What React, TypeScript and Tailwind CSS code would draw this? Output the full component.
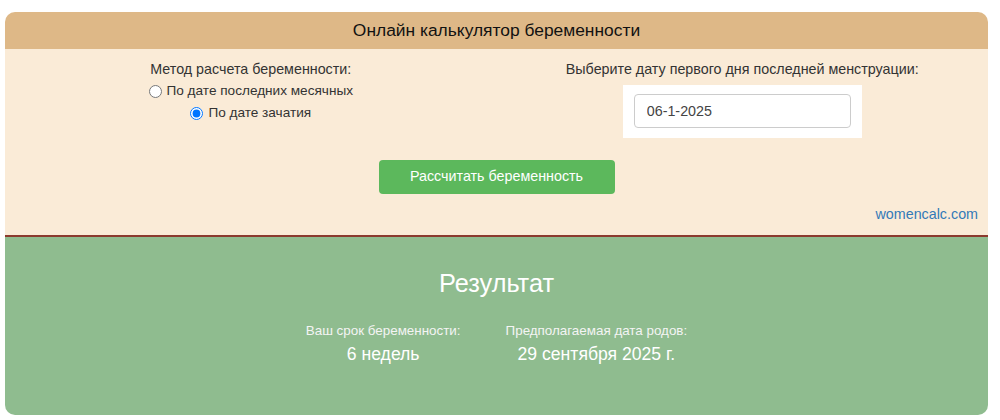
import React, { useState } from 'react';

export default function App() {
  const [method, setMethod] = useState('conception');

  return (
    <div className="pt-[12px] pl-[5px] font-['Liberation_Sans',Arial,sans-serif]">
      <div className="w-[983px] rounded-[10px] overflow-hidden">
        {/* Заголовок */}
        <div className="h-[37px] bg-[#deb887] flex items-center justify-center text-[17.4px] text-[#111]">
          Онлайн калькулятор беременности
        </div>

        {/* Форма */}
        <div className="bg-[#faebd7] pt-[9px] pb-[11px] border-b-2 border-[#8b3a2e] text-[#333]">
          <div className="grid grid-cols-2">
            <div className="flex flex-col items-center">
              <div className="leading-[22px] text-[14.3px]">Метод расчета беременности:</div>
              <label className="flex items-center gap-[5px] leading-[22px]">
                <input
                  type="radio"
                  name="method"
                  className="w-[13px] h-[13px] m-0"
                  checked={method === 'period'}
                  onChange={() => setMethod('period')}
                />
                <span className="text-[13.6px]">По дате последних месячных</span>
              </label>
              <label className="flex items-center gap-[5px] leading-[22px]">
                <input
                  type="radio"
                  name="method"
                  className="w-[13px] h-[13px] m-0"
                  checked={method === 'conception'}
                  onChange={() => setMethod('conception')}
                />
                <span className="text-[13.6px]">По дате зачатия</span>
              </label>
            </div>

            <div className="flex flex-col items-center">
              <div className="leading-[22px] text-[14.3px]">Выберите дату первого дня последней менструации:</div>
              <div className="mt-[5px] bg-white w-[239px] pt-[9px] pb-[10px] px-[11px]">
                <input
                  type="text"
                  defaultValue="06-1-2025"
                  className="w-full h-[34px] border border-[#ccc] rounded-[4px] px-[12px] text-[14.3px] text-[#444] bg-white outline-none"
                />
              </div>
            </div>
          </div>

          <div className="flex justify-center mt-[22px]">
            <button className="w-[236px] h-[34px] bg-[#5cb85c] rounded-[4px] text-white text-[14.3px]">
              Рассчитать беременность
            </button>
          </div>

          <div className="flex justify-end pr-[10px] mt-[10px]">
            <a href="#" className="text-[14.3px] text-[#337ab7] leading-[20px]">
              womencalc.com
            </a>
          </div>
        </div>

        {/* Результат */}
        <div className="bg-[#8fbc8f] h-[178px] text-white flex flex-col items-center pt-[31px]">
          <div className="text-[25.3px] leading-[30px]">Результат</div>
          <div className="flex gap-[45px] mt-[24px] text-center">
            <div>
              <div className="text-[13.4px] leading-[18px] text-[#f4f4f4]">Ваш срок беременности:</div>
              <div className="text-[17.6px] leading-[26px] mt-[1px]">6 недель</div>
            </div>
            <div>
              <div className="text-[13.4px] leading-[18px] text-[#f4f4f4]">Предполагаемая дата родов:</div>
              <div className="text-[17.6px] leading-[26px] mt-[1px]">29 сентября 2025 г.</div>
            </div>
          </div>
        </div>
      </div>
    </div>
  );
}
